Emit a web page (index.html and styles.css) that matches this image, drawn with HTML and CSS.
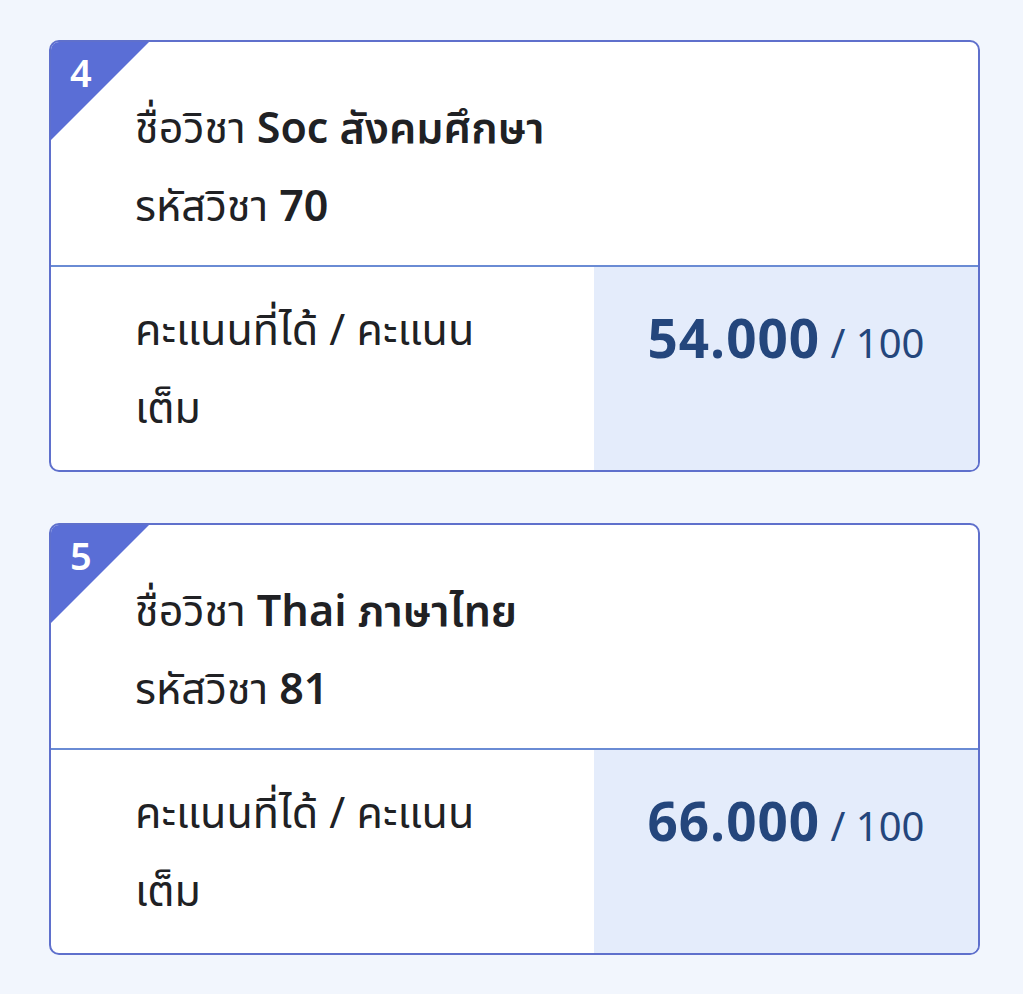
FILE: index.html
```html
<!DOCTYPE html>
<html lang="th">
<head>
  <meta charset="UTF-8">
  <meta name="viewport" content="width=device-width, initial-scale=1.0">
  <title>คะแนนรายวิชา</title>
  <link rel="stylesheet" href="styles.css">
</head>
<body>
  <div class="list">
    <div class="card">
      <span class="corner"></span>
      <span class="no">4</span>
      <div class="head">
        <p class="line">ชื่อวิชา <b>Soc สังคมศึกษา</b></p>
        <p class="line">รหัสวิชา <b>70</b></p>
      </div>
      <div class="score-row">
        <div class="label">คะแนนที่ได้ / คะแนนเต็ม</div>
        <div class="score"><b>54.000</b> / 100</div>
      </div>
    </div>

    <div class="card">
      <span class="corner"></span>
      <span class="no">5</span>
      <div class="head">
        <p class="line">ชื่อวิชา <b>Thai ภาษาไทย</b></p>
        <p class="line">รหัสวิชา <b>81</b></p>
      </div>
      <div class="score-row">
        <div class="label">คะแนนที่ได้ / คะแนนเต็ม</div>
        <div class="score"><b>66.000</b> / 100</div>
      </div>
    </div>
  </div>
</body>
</html>
```

FILE: styles.css
```css
* { box-sizing: border-box; }
body {
  font-family: 'Noto Sans Thai', 'Noto Sans', sans-serif;
  background: #f2f6fd;
  color: #202124;
  margin: 0;
  padding: 40px 43px 0 49px;
}
.list {
  display: flex;
  flex-direction: column;
  gap: 51px;
}
.card {
  position: relative;
  background: white;
  border: 2px solid #5f70cc;
  border-radius: 10px;
  overflow: hidden;
}
.corner {
  position: absolute;
  top: 0;
  left: 0;
  width: 0;
  height: 0;
  border-top: 98px solid #5a6ed6;
  border-right: 98px solid transparent;
}
.no {
  position: absolute;
  top: 14px;
  left: 19px;
  color: white;
  font-weight: 600;
  font-size: 38px;
  line-height: 40px;
}
.head {
  padding: 49px 20px 18px 84px;
  border-bottom: 2px solid #6a8bd4;
}
.line {
  margin: 0;
  font-size: 43px;
  line-height: 78px;
}
.line b { font-weight: 600; }
.score-row {
  display: grid;
  grid-template-columns: 543px 1fr;
}
.label {
  padding: 26px 80px 21px 84px;
  font-size: 43px;
  line-height: 78px;
}
.score {
  background: #e4ecfb;
  color: #24467c;
  text-align: center;
  padding-top: 36px;
  font-size: 40px;
  line-height: 78px;
}
.score b {
  font-size: 53px;
  font-weight: 700;
  letter-spacing: 1px;
}
```
